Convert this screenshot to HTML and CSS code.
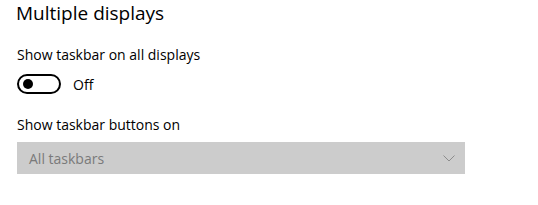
FILE: index.html
```html
<!DOCTYPE html>
<html>
<head>
<meta charset="utf-8">
<link rel="stylesheet" href="styles.css">
</head>
<body>
<div class="page">
  <h2 class="title">Multiple displays</h2>
  <div class="label first">Show taskbar on all displays</div>
  <div class="toggle-row">
    <span class="toggle"><span class="knob"></span></span>
    <span class="state">Off</span>
  </div>
  <div class="label second">Show taskbar buttons on</div>
  <div class="select">
    <span class="select-text">All taskbars</span>
    <svg class="chevron" width="12" height="7" viewBox="0 0 12 7"><path d="M0.5 0.5 L6 6 L11.5 0.5" fill="none" stroke="#8c8c8c" stroke-width="1"/></svg>
  </div>
</div>
</body>
</html>
```
FILE: styles.css
```css
html, body {
  margin: 0;
  padding: 0;
  background: #ffffff;
}
.page {
  padding: 0 0 0 17px;
  font-family: "Open Sans", "Noto Sans", sans-serif;
  color: #000;
}
.title {
  margin: 0 0 0 -1px;
  font-weight: 400;
  font-size: 19px;
  line-height: 26px;
}
.label {
  font-size: 14px;
  line-height: 20px;
}
.label.first {
  margin-top: 19px;
}
.toggle-row {
  display: flex;
  align-items: center;
  margin-top: 9px;
  height: 20px;
}
.toggle {
  box-sizing: border-box;
  width: 44px;
  height: 20px;
  border: 2px solid #000;
  border-radius: 10px;
  display: flex;
  align-items: center;
  padding-left: 4px;
}
.knob {
  width: 10px;
  height: 10px;
  border-radius: 50%;
  background: #000;
}
.state {
  font-size: 14px;
  margin-left: 12px;
}
.label.second {
  margin-top: 21px;
}
.select {
  box-sizing: border-box;
  width: 448px;
  height: 32px;
  margin-top: 7px;
  background: #cccccc;
  display: flex;
  align-items: center;
  justify-content: space-between;
  padding: 0 10px 0 12px;
}
.select-text {
  font-size: 14px;
  color: #7a7a7a;
}
.chevron {
  display: block;
}
```
